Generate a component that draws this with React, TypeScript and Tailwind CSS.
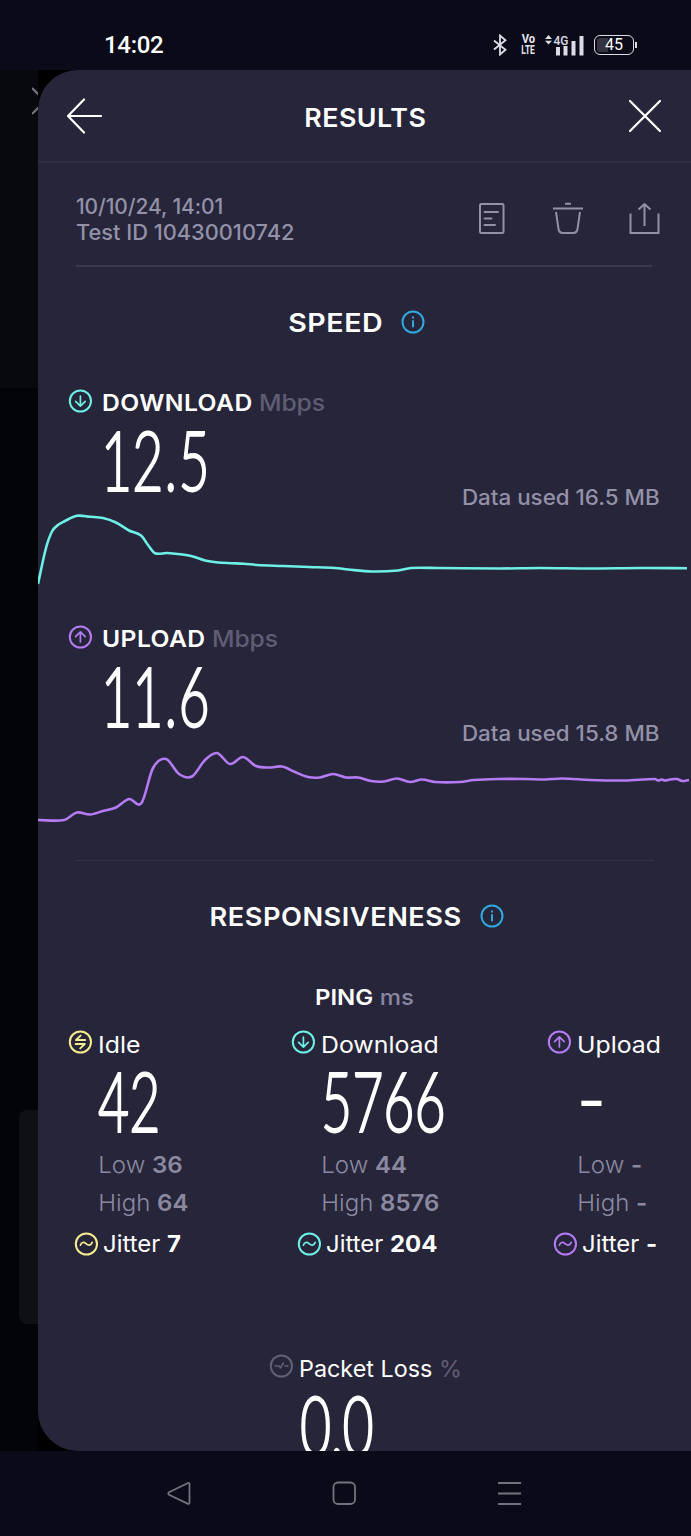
import type { ReactNode } from 'react';
import { clsx } from 'clsx';

type Point = [number, number];
type IconKind = 'down' | 'up' | 'idle' | 'jitter' | 'loss';

const CYAN = '#6df0e6';
const PURPLE = '#b57bf5';
const YELLOW = '#f6ee8e';
const GREY = '#625f76';

const downloadPoints: Point[] = [
  [0, 74], [8, 38], [14, 21.5], [20, 15], [26, 11.5], [39, 5.8], [52, 6.8], [65, 8], [78, 12.5],
  [91, 20.5], [103, 25.5], [110, 35], [117, 43.2], [129, 43], [142, 44.2], [154, 46.2], [167, 50.5],
  [180, 52.5], [193, 53.2], [206, 53.7], [219, 55], [245, 56], [271, 57], [297, 58], [310, 59.5],
  [334, 61.5], [360, 60.5], [373, 58], [399, 58], [462, 58.5], [502, 58], [552, 58.5], [602, 58],
  [649, 58.2],
];

const uploadPoints: Point[] = [
  [0, 74], [26, 74], [39, 66.5], [52, 68.5], [65, 65], [78, 61.5], [91, 53], [103.5, 57], [115, 22],
  [128, 13], [141, 28], [154, 30.5], [167, 14], [179, 7], [192, 18], [205, 11], [218, 20],
  [231, 21.5], [244, 20.5], [257, 26], [270, 31], [282, 31.5], [295, 28], [308, 31.5], [320, 31.5],
  [333, 35], [346, 35.5], [359, 32.5], [372, 36], [384, 33.5], [397, 36], [422, 36], [436, 34],
  [460, 33], [487, 33], [507, 33.5], [524, 32.5], [552, 34], [587, 34.5], [617, 33], [620, 34.5],
  [624, 33.5], [627, 34.5], [632, 33.5], [639, 33], [644, 35], [651, 34],
];

const pings = [
  { name: 'Idle', icon: 'idle', color: YELLOW, value: '42', low: '36', high: '64', jitter: '7', width: 'w-[223px]' },
  { name: 'Download', icon: 'down', color: CYAN, value: '5766', low: '44', high: '8576', jitter: '204', width: 'w-[256px]' },
  { name: 'Upload', icon: 'up', color: PURPLE, value: '-', low: '-', high: '-', jitter: '-', width: 'w-[140px]' },
] as const;

const smooth = (pts: Point[]) => {
  const slope = (k: number) => {
    const a = pts[Math.max(k - 1, 0)];
    const b = pts[Math.min(k + 1, pts.length - 1)];
    return (b[1] - a[1]) / (b[0] - a[0]);
  };
  return pts.reduce((d, [x, y], i) => {
    if (i === 0) return `M${x} ${y}`;
    const [px, py] = pts[i - 1];
    const h = (x - px) / 3;
    return `${d} C${px + h} ${py + slope(i - 1) * h} ${x - h} ${y - slope(i) * h} ${x} ${y}`;
  }, '');
};

const Chart = ({ points, color }: { points: Point[]; color: string }) => (
  <svg className="block h-20 w-full" viewBox="0 0 653 80" fill="none">
    <path d={smooth(points)} stroke={color} strokeWidth="2.6" strokeLinejoin="round" />
  </svg>
);

const RoundIcon = ({ kind, color }: { kind: IconKind; color: string }) => (
  <svg
    className="size-6 shrink-0"
    viewBox="0 0 24 24"
    fill="none"
    stroke={color}
    strokeWidth="2"
    strokeLinecap="round"
    strokeLinejoin="round"
  >
    <circle cx="12.4" cy="12" r="10.6" />
    {kind === 'down' && <path d="M12.4 7v10M7.6 12.4l4.8 4.8 4.8-4.8" strokeWidth="1.7" />}
    {kind === 'up' && <path d="M12.4 17V7M7.6 11.6l4.8-4.8 4.8 4.8" strokeWidth="1.7" />}
    {kind === 'idle' && <path d="M12.6 5.600 8 10h9.200M7.600 14h9.200l-4.600 4.400" strokeWidth="1.900" />}
    {kind === 'jitter' && <path d="M6.400 13.200c1-3.200 3.300-3.600 5.600-1.600s4.800 2.400 6.200-1.200" strokeWidth="1.7" />}
    {kind === 'loss' && <path d="M6 12h4l1.400 2 3-5M16 12H19" strokeWidth="1.500" />}
  </svg>
);

const InfoIcon = () => (
  <svg className="size-6 shrink-0" viewBox="0 0 24 24" fill="none" stroke="#2fa8e0" strokeWidth="2">
    <circle cx="12" cy="12" r="10.500" />
    <path d="M12 10.300v7M12 6.500v2" />
  </svg>
);

const SectionTitle = ({ children, className }: { children: ReactNode; className: string }) => (
  <div className="flex h-[110px] items-center justify-center gap-[18px] pr-4">
    <h2 className={clsx('text-[26px] font-semibold tracking-[0.5px] text-white', className)}>{children}</h2>
    <InfoIcon />
  </div>
);

const BigValue = ({ value, dotClass = 'mx-[2px]' }: { value: string; dotClass?: string }) => {
  const [whole, fraction] = value.split('.');
  return (
    <div
      className={clsx(
        "w-fit origin-left font-['Lato',sans-serif] text-[82px] leading-[60px] font-light text-white [-webkit-text-stroke:2px_white]",
        value === '-' ? '-mt-[4px] scale-x-[0.95]' : 'scale-x-[0.655]',
      )}
    >
      {whole}
      {fraction && (
        <>
          <span className={dotClass}>.</span>
          {fraction}
        </>
      )}
    </div>
  );
};

type MetricProps = {
  label: string;
  value: string;
  used: string;
  icon: IconKind;
  color: string;
  points: Point[];
};

const Metric = ({ label, value, used, icon, color, points }: MetricProps) => (
  <section className="h-[236px]">
    <div className="flex h-[52px] items-center pl-[30px]">
      <div className="-mt-1">
        <RoundIcon kind={icon} color={color} />
      </div>
      <div className="mt-px ml-2.5 flex origin-left scale-x-[1.072] gap-1.5 text-[23px]">
        <span className="font-semibold tracking-[0.4px] text-white">{label}</span>
        <span className="font-medium tracking-[-0.1px] text-[#5f5d73]">Mbps</span>
      </div>
    </div>
    <div className="flex h-[81px] justify-between pr-[31px] pl-[63px]">
      <BigValue value={value} />
      <div className="-mb-px origin-right scale-x-[1.065] self-end text-[21px] leading-[26px] font-medium text-[#9391a8]">
        Data used {used} MB
      </div>
    </div>
    <Chart points={points} color={color} />
  </section>
);

const StatusBar = () => (
  <div className="flex h-[70px] items-center bg-[#0b0a18] pt-[19px] pr-[54px] pl-[104px]">
    <span className="font-['Roboto',sans-serif] text-[24px] leading-none font-medium tracking-[-0.3px] text-white">14:02</span>
    <div className="ml-auto flex items-center">
      <svg className="h-[22px] w-[14px]" viewBox="0 0 14 22" fill="none" stroke="#dddce6" strokeWidth="1.800">
        <path d="M1 6.500 12.500 15.800 7 20.500v-19L12.500 6.200 1 15.500" />
      </svg>
      <div className="ml-[13px] flex w-4 flex-col items-center font-['Roboto',sans-serif] text-[12.5px] leading-[10.5px] font-bold text-[#e6e5ee]">
        <span className="scale-x-[0.9]">Vo</span>
        <span className="scale-x-[0.67]">LTE</span>
      </div>
      <svg className="ml-[9px] h-[22px] w-[40px] overflow-visible" viewBox="0 0 40 22" fill="#dddce6">
        <path d="M3.500 1 7 5H0zM3.500 10.500 0 6.700h7z" />
        <text x="8.500" y="10.500" fontFamily="Roboto, sans-serif" fontSize="13.500" fontWeight="500" textLength="15" lengthAdjust="spacingAndGlyphs">
          4G
        </text>
        <path d="M11 13h4v8.500h-4zM18.500 12h4v9.500h-4zM26.500 7h4v14.500h-4zM34.500 2h4v19.500h-4z" />
      </svg>
      <div className="ml-[9px] flex h-5 w-10 items-center justify-center rounded-md border-[1.5px] border-[#dddce6] bg-linear-to-r from-[#34333f] from-35% to-transparent to-35% bg-clip-content p-0.5 font-['Roboto',sans-serif] text-[16px] leading-none text-white">
        45
      </div>
      <div className="ml-px h-1.5 w-0.5 bg-[#dddce6]" />
    </div>
  </div>
);

const Header = () => (
  <header className="flex h-[93px] items-center justify-between border-b-2 border-[#302e43] pt-px pr-[29px] pl-7">
    <svg className="h-9 w-9" viewBox="0 0 36 36" fill="none" stroke="white" strokeWidth="2.200" strokeLinecap="round" strokeLinejoin="round">
      <path d="M35 18H2M18 1.500 2 18l16 16.500" />
    </svg>
    <h1 className="scale-x-[1.03] pt-0.5 text-[26px] font-semibold tracking-[0.500px] text-white">RESULTS</h1>
    <svg className="h-[34px] w-[34px]" viewBox="0 0 34 34" fill="none" stroke="white" strokeWidth="2.200" strokeLinecap="round">
      <path d="m2 2 30 30M32 2 2 32" />
    </svg>
  </header>
);

const TestInfo = () => (
  <div className="mr-[31px] ml-[38px] flex h-[102px] justify-between pt-[31px] text-[#9391a8]">
    <div className="text-[21px] leading-[26px] font-medium">
      <div className="tracking-[-0.1px]">10/10/24, 14:01</div>
      <div className="origin-left scale-x-[1.037]">Test ID 10430010742</div>
    </div>
    <svg className="mt-2 h-8 w-[182px]" viewBox="0 0 182 32" fill="none" stroke="#9391a8" strokeWidth="2">
      <rect x="2" y="2" width="23.500" height="29" rx="1.500" />
      <path d="M6.500 10H20M6.500 16.500h7M6.500 23H17" strokeLinecap="round" />
      <path d="M75 6.500h30M87 1.800h6M78 10l2.500 17q.6 4 4.500 4h10q3.900 0 4.500-4L102 10" />
      <path d="M152.500 11.500V31h28V11.500M166.500 24V2M160.500 7.500l6-5.500 6 5.500" />
    </svg>
  </div>
);

const NavBar = () => (
  <nav className="h-[85px] bg-[#0b0a18]">
    <svg className="block h-full w-full" viewBox="0 0 691 85" fill="none" stroke="#74727f" strokeWidth="1.800" strokeLinejoin="round">
      <path d="M169 41.200 187.500 32.200q2-.8 2 1V51.500q0 2-2 1.100L169 43.800q-1.500-1.300 0-2.600z" />
      <rect x="333.500" y="31.500" width="21.500" height="21.500" rx="4.500" />
      <path d="M498 32h23M498 42.500h23M498 53h23" />
    </svg>
  </nav>
);

export default function App() {
  return (
    <div className="flex h-[1536px] w-[691px] flex-col overflow-hidden bg-black font-['Inter',sans-serif]">
      <StatusBar />
      <div className="flex h-[1381px]">
        {/* page behind the sheet */}
        <div className="flex w-[38px] flex-col items-end bg-[#030408]">
          <div className="flex h-[318px] w-full justify-end bg-[#08090f] pt-[17px]">
            <svg className="h-7 w-1.5" viewBox="0 0 6 28" fill="none" stroke="#77767c" strokeWidth="2">
              <path d="m0 1 14 14M0 27l14-14" />
            </svg>
          </div>
          <div className="mt-[722px] h-[214px] w-[19px] rounded-l-lg bg-[#0f0f16]" />
        </div>

        <main className="h-full flex-1 overflow-hidden rounded-l-[40px] bg-[#27253a]">
          <Header />
          <TestInfo />
          <div className="mr-[39px] ml-[38px] h-0.5 bg-[#3a384c]" />

          <SectionTitle className="scale-x-[1.1] px-[4.5px]">SPEED</SectionTitle>
          <Metric label="DOWNLOAD" value="12.5" used="16.5" icon="down" color={CYAN} points={downloadPoints} />
          <Metric label="UPLOAD" value="11.6" used="15.8" icon="up" color={PURPLE} points={uploadPoints} />
          <div className="mt-[11px] mr-[37px] ml-[38px] h-px bg-[#36344a]" />

          <SectionTitle className="scale-x-[1.046] px-1.5">RESPONSIVENESS</SectionTitle>
          <div className="flex h-[52px] scale-x-[1.09] items-center justify-center gap-1.5 text-[22px]">
            <span className="font-semibold text-white">PING</span>
            <span className="font-medium text-[#8886a0]">ms</span>
          </div>

          <div className="flex pl-[30px]">
            {pings.map((p) => (
              <div key={p.name} className={clsx('shrink-0', p.width)}>
                <div className="flex h-11 items-center gap-1.5">
                  <div className="-mt-1.5">
                    <RoundIcon kind={p.icon} color={p.color} />
                  </div>
                  <span className="origin-left scale-x-[1.08] text-[23px] text-white">{p.name}</span>
                </div>
                <div className="h-[70px] pt-[3px] pl-[30px]">
                  <BigValue value={p.value} />
                </div>
                <div className="mt-[9px] w-fit origin-left scale-x-[1.045] pl-[29px] text-[23px] leading-[38px] font-light text-[#8b89a0]">
                  <div>
                    Low <b className="font-semibold">{p.low}</b>
                  </div>
                  <div>
                    High <b className="font-semibold">{p.high}</b>
                  </div>
                </div>
                <div className="flex h-11 items-center gap-[5px] pl-1.5">
                  <RoundIcon kind="jitter" color={p.color} />
                  <span className="origin-left scale-x-[1.04] pt-px text-[23px] text-white">
                    Jitter <b className="font-bold">{p.jitter}</b>
                  </span>
                </div>
              </div>
            ))}
          </div>

          <div className="mt-[81px] pl-[231px]">
            <div className="flex h-11 items-center gap-1.5">
              <div className="-mt-1.5">
                <RoundIcon kind="loss" color={GREY} />
              </div>
              <span className="origin-left scale-x-[1.015] text-[23px] text-white">
                Packet Loss <span className="text-[#625f76]">%</span>
              </span>
            </div>
            <div className="pt-[3px] pl-[31px]">
              <BigValue value="0.0" dotClass="-mx-px" />
            </div>
          </div>
        </main>
      </div>
      <NavBar />
    </div>
  );
}
